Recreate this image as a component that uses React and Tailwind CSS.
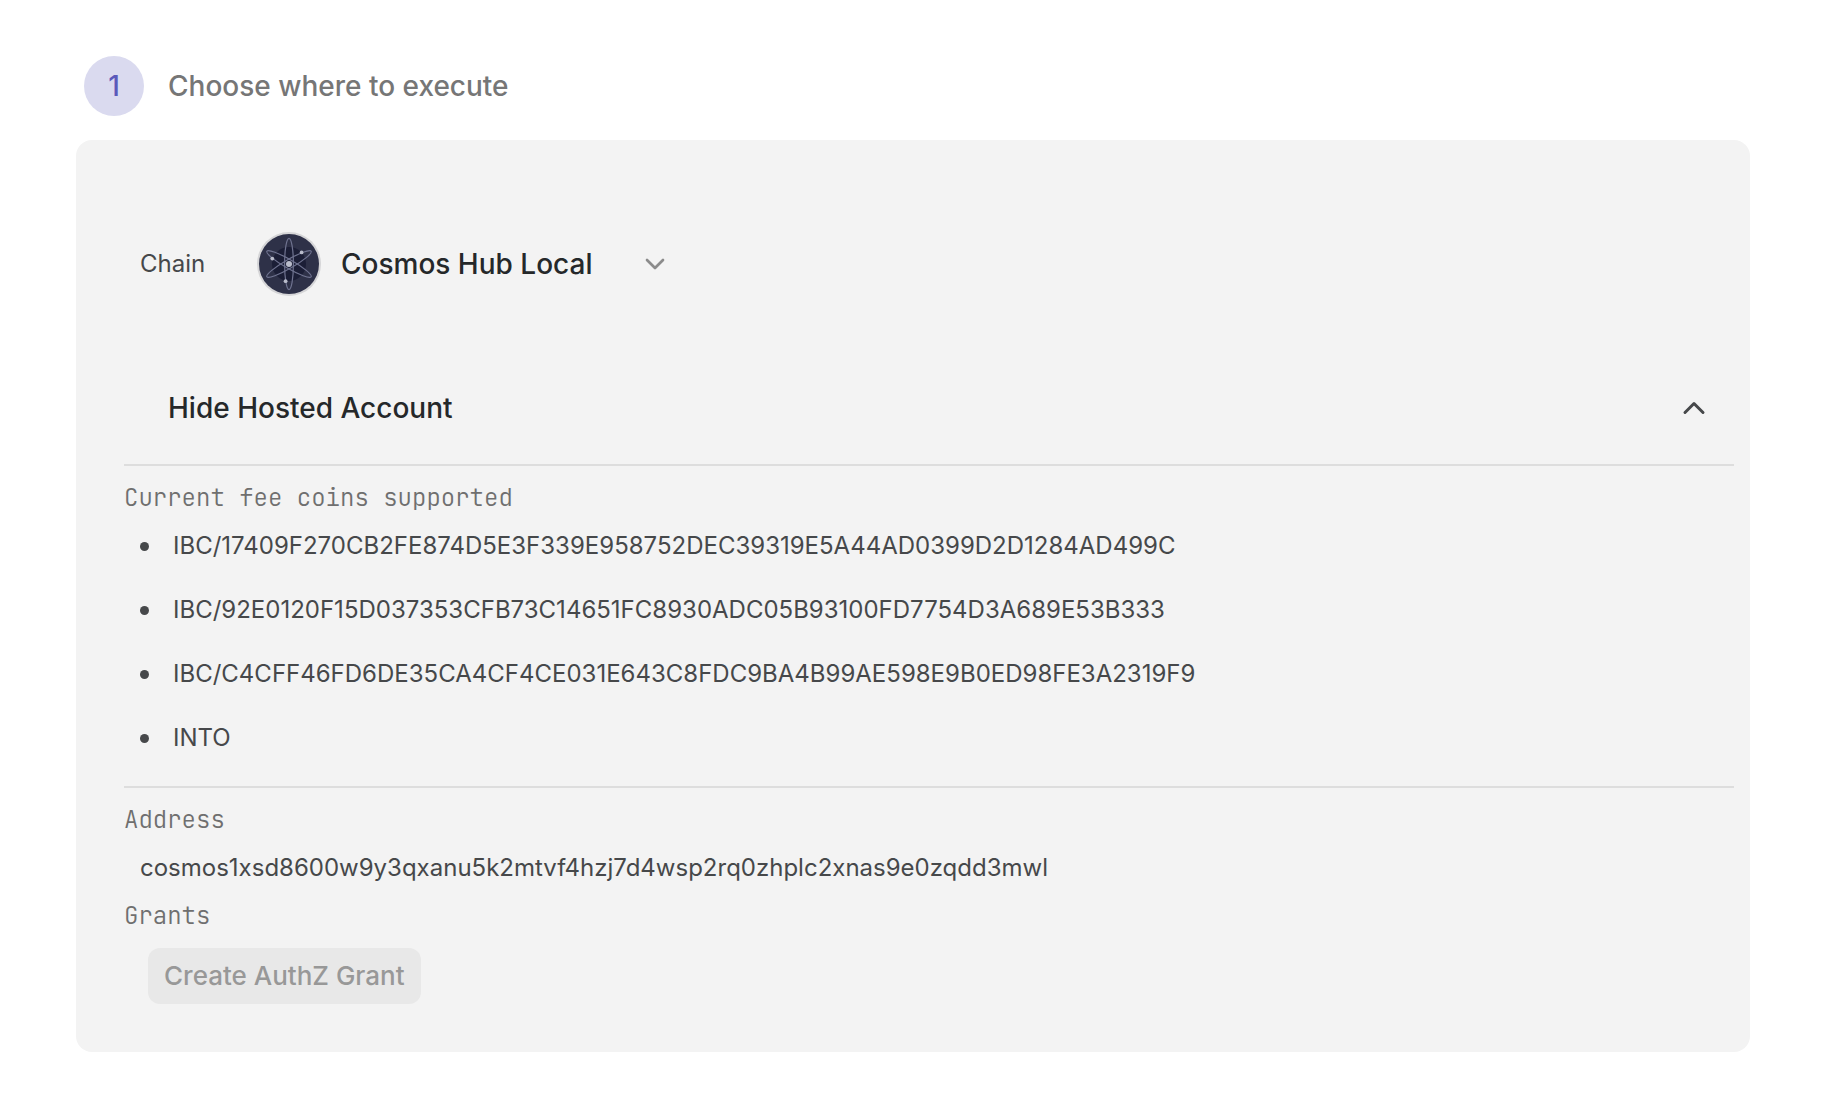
import React, { useState } from 'react';
import { ChevronDown, ChevronUp } from 'lucide-react';

const chains = ['Cosmos Hub Local'];

const feeCoins = [
    'IBC/17409F270CB2FE874D5E3F339E958752DEC39319E5A44AD0399D2D1284AD499C',
    'IBC/92E0120F15D037353CFB73C14651FC8930ADC05B93100FD7754D3A689E53B333',
    'IBC/C4CFF46FD6DE35CA4CF4CE031E643C8FDC9BA4B99AE598E9B0ED98FE3A2319F9',
    'INTO',
];

const address = 'cosmos1xsd8600w9y3qxanu5k2mtvf4hzj7d4wsp2rq0zhplc2xnas9e0zqdd3mwl';

const CosmosLogo = () => (
    <svg viewBox="0 0 64 64" className="size-16 shrink-0" aria-hidden="true">
        <circle cx="32" cy="32" r="32" fill="#d5d5d7" />
        <circle cx="32" cy="32" r="30" fill="#2e3148" />
        <circle cx="32" cy="32" r="17" fill="#1b1e36" />
        <g fill="none" stroke="#6f7390" strokeWidth="1.2">
            <ellipse cx="32" cy="32" rx="4.4" ry="25.6" />
            <ellipse cx="32" cy="32" rx="4.4" ry="25.6" transform="rotate(60 32 32)" />
            <ellipse cx="32" cy="32" rx="4.4" ry="25.6" transform="rotate(120 32 32)" />
        </g>
        <g fill="#b9bccb">
            <circle cx="32" cy="32" r="3" />
            <circle cx="44.6" cy="20.4" r="1.9" />
            <circle cx="15.3" cy="26.6" r="1.9" />
            <circle cx="28.6" cy="49.2" r="1.9" />
        </g>
    </svg>
);

const SectionLabel = ({ children }) => (
    <h3 className="font-['JetBrains_Mono','Liberation_Mono',monospace] text-[24px] leading-[48px] font-light text-[#6f6f6f]">
        {children}
    </h3>
);

const App = () => {
    const [chain, setChain] = useState(chains[0]);
    const [open, setOpen] = useState(true);
    const Chevron = open ? ChevronUp : ChevronDown;

    return (
        <main className="min-h-screen bg-white pt-14 pr-24 pb-11 pl-[76px] font-['Inter',sans-serif] text-[24px] text-[#46484a]">
            <div className="flex items-center gap-6 pl-2">
                <span className="flex size-[60px] items-center justify-center rounded-full bg-[#dadaef] text-[28px] font-medium text-[#5b59ba]">
                    1
                </span>
                <h1 className="text-[28px] font-medium text-[#767676]">Choose where to execute</h1>
            </div>

            <section className="mt-6 rounded-2xl bg-[#f3f3f3] pt-[92px] pr-4 pb-12 pl-12">
                <div className="flex items-center pl-4">
                    <label htmlFor="chain" className="w-[117px]">Chain</label>
                    <CosmosLogo />
                    <div className="ml-5 grid items-center">
                        <select
                            id="chain"
                            value={chain}
                            onChange={(e) => setChain(e.target.value)}
                            className="col-start-1 row-start-1 h-16 appearance-none bg-transparent pr-[78px] text-[28px] font-medium text-[#25282a]"
                        >
                            {chains.map((name) => (
                                <option key={name}>{name}</option>
                            ))}
                        </select>
                        <ChevronDown
                            className="pointer-events-none col-start-1 row-start-1 size-8 justify-self-end text-[#8b8b8b]"
                            strokeWidth={2}
                        />
                    </div>
                </div>

                <button
                    type="button"
                    aria-expanded={open}
                    onClick={() => setOpen(!open)}
                    className="mt-16 mb-2 flex h-24 w-full items-center justify-between pr-[22px] pl-11 text-[28px] font-medium text-[#25282a]"
                >
                    {open ? 'Hide' : 'Show'} Hosted Account
                    <Chevron className="size-9 text-[#46484a]" strokeWidth={2} />
                </button>

                {open && (
                    <>
                        <div className="border-t-2 border-[#dddddd] pt-2 pb-6">
                            <SectionLabel>Current fee coins supported</SectionLabel>
                            <ul className="flex flex-col gap-4 pl-4 leading-[48px]">
                                {feeCoins.map((coin) => (
                                    <li key={coin} className="flex items-center gap-6">
                                        <span className="size-[9px] rounded-full bg-[#46484a]" />
                                        {coin}
                                    </li>
                                ))}
                            </ul>
                        </div>

                        <div className="border-t-2 border-[#dddddd] pt-2">
                            <SectionLabel>Address</SectionLabel>
                            <p className="pl-4 leading-[48px]">{address}</p>
                            <SectionLabel>Grants</SectionLabel>
                            <button
                                type="button"
                                disabled
                                className="mt-2 ml-6 block h-14 rounded-xl bg-[#e8e8e8] px-4 pb-0.5 text-[26px] font-medium text-[#989898]"
                            >
                                Create AuthZ Grant
                            </button>
                        </div>
                    </>
                )}
            </section>
        </main>
    );
};

export default App;
